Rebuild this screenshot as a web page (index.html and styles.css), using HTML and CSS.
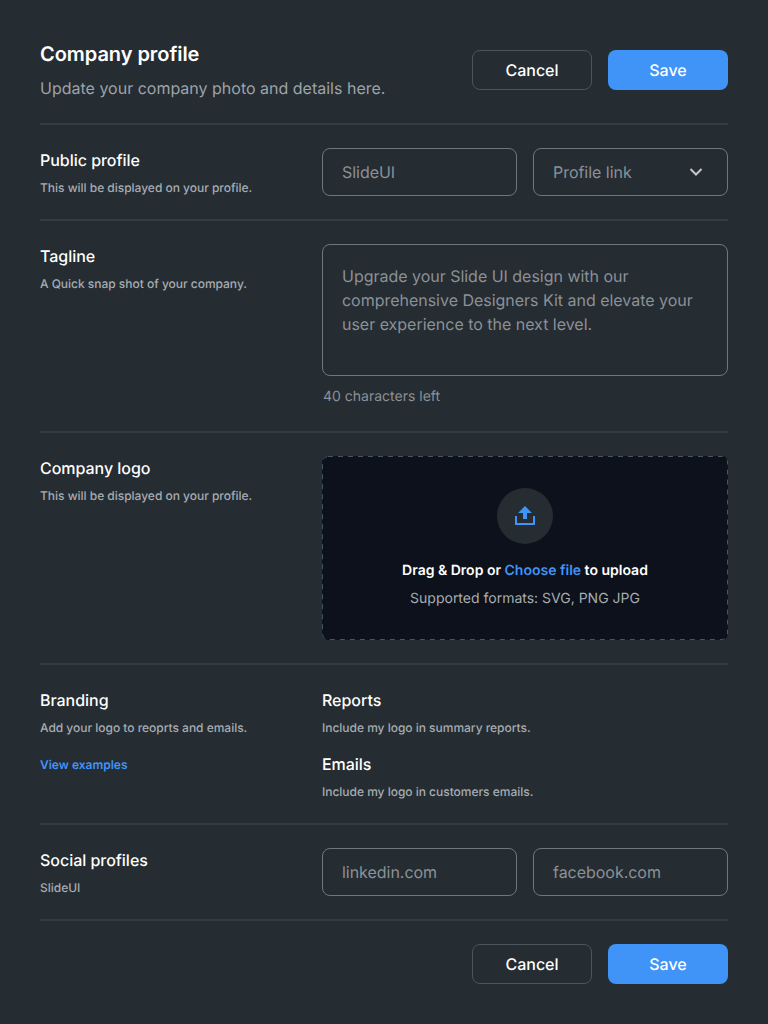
FILE: index.html
```html
<!DOCTYPE html>
<html lang="en">
<head>
<meta charset="utf-8">
<title>Company profile</title>
<link rel="stylesheet" href="styles.css">
</head>
<body>
<main class="page">
  <header class="header">
    <div>
      <h1 class="title">Company profile</h1>
      <p class="subtitle">Update your company photo and details here.</p>
    </div>
    <div class="actions">
      <button class="btn">Cancel</button>
      <button class="btn btn-primary">Save</button>
    </div>
  </header>

  <section class="row row-field">
    <div class="info">
      <h2 class="label">Public profile</h2>
      <p class="hint">This will be displayed on your profile.</p>
    </div>
    <div class="content pair">
      <div class="input">SlideUI</div>
      <div class="input select">Profile link
        <svg class="chevron" width="24" height="24" viewBox="0 0 24 24"><path d="M6.500 9l5.500 5.500L17.500 9" fill="none" stroke="currentColor" stroke-width="2"/></svg>
      </div>
    </div>
  </section>

  <section class="row row-tagline">
    <div class="info">
      <h2 class="label">Tagline</h2>
      <p class="hint">A Quick snap shot of your company.</p>
    </div>
    <div class="content">
      <div class="textarea">Upgrade your Slide UI design with our comprehensive Designers Kit and elevate your user experience to the next level.</div>
      <p class="counter">40 characters left</p>
    </div>
  </section>

  <section class="row row-logo">
    <div class="info">
      <h2 class="label">Company logo</h2>
      <p class="hint">This will be displayed on your profile.</p>
    </div>
    <div class="content dropzone">
      <svg class="outline" width="406" height="184"><rect x=".5" y=".5" width="405" height="183" rx="5.500"/></svg>
      <div class="upload-icon">
        <svg width="24" height="24" viewBox="0 0 24 24"><path d="M3 12v8h18v-8" fill="none" stroke="currentColor" stroke-width="2"/><path d="M12 2l7 7h-5v6h-4V9H5z" fill="currentColor"/></svg>
      </div>
      <p class="drop-text">Drag &amp; Drop or <a class="link">Choose file</a> to upload</p>
      <p class="formats">Supported formats: SVG, PNG JPG</p>
    </div>
  </section>

  <section class="row row-branding">
    <div class="info">
      <h2 class="label">Branding</h2>
      <p class="hint">Add your logo to reoprts and emails.</p>
      <a class="link examples">View examples</a>
    </div>
    <div class="content options">
      <div>
        <h2 class="label">Reports</h2>
        <p class="hint">Include my logo in summary reports.</p>
      </div>
      <div>
        <h2 class="label">Emails</h2>
        <p class="hint">Include my logo in customers emails.</p>
      </div>
    </div>
  </section>

  <section class="row row-field">
    <div class="info">
      <h2 class="label">Social profiles</h2>
      <p class="hint">SlideUI</p>
    </div>
    <div class="content pair">
      <div class="input">linkedin.com</div>
      <div class="input">facebook.com</div>
    </div>
  </section>

  <footer class="footer actions">
    <button class="btn">Cancel</button>
    <button class="btn btn-primary">Save</button>
  </footer>
</main>
</body>
</html>
```

FILE: styles.css
```css
* { box-sizing: border-box; }
body { margin: 0; background: #252c32; font-family: Inter, sans-serif; color: #fff; text-rendering: geometricPrecision; }
h1, h2, p { margin: 0; }
.page { width: 768px; height: 1024px; padding: 40px; }
.header { display: flex; justify-content: space-between; height: 83px; }
.title { font-size: 20px; line-height: 28px; font-weight: 600; letter-spacing: -.05px; }
.subtitle { margin-top: 8px; font-size: 16px; line-height: 24px; color: #9da3a9; }
.actions { display: flex; gap: 16px; }
.header .actions { padding-top: 10px; }
.btn { width: 120px; height: 40px; padding: 0; border: 1px solid #4d545b; border-radius: 8px; background: transparent; color: #fff; font: 500 16px/24px Inter, sans-serif; text-rendering: inherit; }
.btn-primary { border: 0; background: #4094f7; }
.row { display: flex; border-top: 2px solid #353c43; padding-top: 23px; }
.row-field { height: 96px; }
.row-tagline { height: 212px; }
.row-logo { height: 232px; }
.row-branding { height: 160px; }
.info { width: 282px; }
.content { width: 406px; }
.label { font-size: 16px; line-height: 24px; font-weight: 500; letter-spacing: -.03px; }
.hint { margin-top: 8px; font-size: 12px; line-height: 16px; font-weight: 500; letter-spacing: -.02px; color: #a7adb2; }
.pair { display: flex; gap: 16px; }
.input { flex: 1; display: flex; align-items: center; justify-content: space-between; height: 48px; padding: 0 19px; border: 1px solid #6f767c; border-radius: 8px; font-size: 16px; letter-spacing: -.03px; color: #8b9197; }
.chevron { color: #c4c8cb; }
.textarea { height: 132px; padding: 19px; border: 1px solid #6f767c; border-radius: 8px; font-size: 16px; line-height: 24px; letter-spacing: -.02px; color: #8b9197; }
.counter { margin: 11px 0 0 1px; font-size: 14px; line-height: 20px; color: #8b9197; }
.dropzone { position: relative; display: flex; flex-direction: column; align-items: center; height: 184px; padding-top: 32px; border-radius: 6px; background: #0c111b; }
.outline { position: absolute; inset: 0; fill: none; stroke: #46545d; stroke-dasharray: 5 5; }
.upload-icon { display: grid; place-items: center; width: 56px; height: 56px; border-radius: 50%; background: #252c32; color: #4094f7; }
.drop-text { margin-top: 15px; font-size: 14px; line-height: 24px; font-weight: 600; }
.formats { margin-top: 4px; font-size: 14px; line-height: 24px; color: #a7adb2; }
.link { color: #4094f7; }
.examples { display: block; margin-top: 20px; font-size: 12px; line-height: 18px; font-weight: 600; }
.options { display: flex; flex-direction: column; gap: 16px; }
.footer { justify-content: flex-end; padding-top: 23px; border-top: 2px solid #353c43; }
```
